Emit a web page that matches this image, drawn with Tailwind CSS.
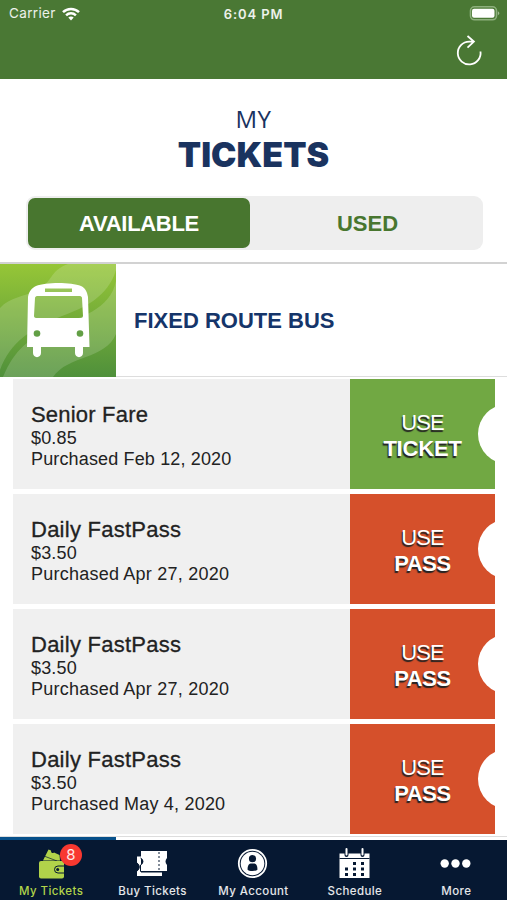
<!DOCTYPE html>
<html lang="en">
<head>
<meta charset="utf-8">
<title>My Tickets</title>
<script src="https://cdn.jsdelivr.net/npm/@tailwindcss/browser@4"></script>
</head>
<body class="w-[507px] h-[900px] overflow-hidden bg-white font-['Liberation_Sans',Arial,sans-serif] flex flex-col whitespace-nowrap">
<header class="h-[79px] shrink-0 bg-[#4a7834] text-white/90 font-[Inter,sans-serif]">
  <div class="grid grid-cols-3 items-center h-7 px-[9px] text-[13px] leading-none">
    <div class="flex items-center gap-[6px]"><span class="tracking-[0.35px] text-[13.5px]">Carrier</span>
      <svg class="-mt-px" width="18" height="14" viewBox="0 0 18 14" fill="none" stroke="#fff" stroke-width="2.5"><path d="M1 5.2C5.4.8 12.6.8 17 5.2M4.1 8.3c2.7-2.6 7.1-2.6 9.8 0"/><path d="M6.3 10.6c1.500-1.400 3.900-1.400 5.400 0L9 13.400z" fill="#fff" stroke="none"/></svg>
    </div>
    <div class="text-center font-semibold tracking-[0.9px]">6:04 PM</div>
    <div class="flex justify-end -mr-[2px] -mt-px"><svg width="31" height="15" viewBox="0 0 31 15"><rect x="1.5" y=".8" width="26" height="13" rx="4" fill="none" stroke="#8db07d" stroke-width="1.6"/><rect x="3" y="2.8" width="22.5" height="9" rx="2" fill="#fff"/><path d="M28.9 5.3c2 1 2 3 0 4z" fill="#9fbb91"/></svg></div>
  </div>
  <div class="flex justify-end pr-[24px] pt-[6px]"><svg width="28" height="32" viewBox="0 0 28 32" fill="none" stroke="#fff" stroke-width="1.8"><path d="M25.5 17.5A11.4 11.4 0 1 1 14.2 7.6H19M12.5 2l6.4 5.6-6.4 6"/></svg></div>
</header>
<section class="h-[117px] shrink-0 pt-[26px] text-center text-[#1a335f]">
  <div class="text-[24px] leading-[28px] tracking-[0.5px] font-['Open_Sans',sans-serif]">MY</div>
  <h1 class="mt-[2px] text-[34px] leading-[40px] font-black font-[Inter,sans-serif] tracking-[0px]">TICKETS</h1>
</section>
<div class="ml-[26px] w-[457px] h-[54px] shrink-0 rounded-[9px] bg-[#eeeeee] p-[2px] flex items-center font-bold text-[22px]">
  <div class="w-[222px] h-[50px] rounded-[7px] bg-[#48762f] text-white flex items-center justify-center tracking-[-0.3px]">AVAILABLE</div>
  <div class="flex-1 text-center text-[#48762f] pl-1">USED</div>
</div>
<section class="mt-[12px] h-[115px] shrink-0 border-t-2 border-t-[#d2d2d2] border-b border-b-[#dddddd] flex items-start">
  <svg class="shrink-0" width="116" height="113" viewBox="0 0 116 113">
    <defs><linearGradient id="g" x2="0" y2="1"><stop stop-color="#96c637"/><stop offset="1" stop-color="#4f903b"/></linearGradient></defs>
    <path fill="url(#g)" d="M0 0h116v113H0z"/>
    <path d="M0 44C10 33 24 33 37 26 54 17 49 7 68 0h48v6C108 33 84 44 62 52 32 64 10 78 0 106z" fill="#fff" fill-opacity=".16"/>
    <path d="M116 17C110 46 80 53 56 63 28 75 15 85 3 113h50C68 91 105 96 116 70z" fill="#fff" fill-opacity=".16"/>
    <path fill="#fff" fill-rule="evenodd" d="M36 22c10-4 35-4 45 0 4 2 6 5 7 11l1.5 50H83v6c0 5.500-8 5.500-8 0v-6H41v6c0 5.500-8 5.500-8 0v-6h-6l1-50c1-6 4-9 8-11zM45 24.500v3.500h27v-3.500zM37 32c-1 0-2 1-2 2l-1 18c0 1 1 2 2 2h45c1 0 2-1 2-2l-1-18c0-1-1-2-2-2z"/>
    <circle cx="37" cy="69.500" r="3.300" fill="#629f45"/><circle cx="80" cy="69.500" r="3.300" fill="#629f45"/>
  </svg>
  <h2 class="ml-[18px] leading-[114px] text-[22px] font-bold text-[#15356a]">FIXED ROUTE BUS</h2>
</section>
<main class="mt-[2px] ml-[13px] w-[482px] flex flex-col gap-[5px] shrink-0 text-[#222] h-[455px]">
  <article class="flex h-[110px] shrink-0"><div class="w-[337px] bg-[#f0f0f0] pl-[18px] pt-[23px]"><h3 class="text-[22px] leading-[26px] tracking-[0.2px] [-webkit-text-stroke:0.3px_#222]">Senior Fare</h3><p class="text-[18px] leading-[21px] tracking-[0.15px]">$0.85</p><p class="text-[18px] leading-[21px] tracking-[0.15px]">Purchased Feb 12, 2020</p></div>
  <button class="relative overflow-hidden w-[145px] pt-[3px] bg-[#71a843] text-white text-[22px] leading-[26px] [text-shadow:-1px_2px_1px_#222]"><span class="block tracking-[-0.9px]">USE</span><b class="block tracking-[-0.2px]">TICKET</b><i class="absolute rounded-full bg-white size-[60px] left-[128px] top-[25px]"></i></button></article>
  <article class="flex h-[110px] shrink-0"><div class="w-[337px] bg-[#f0f0f0] pl-[18px] pt-[23px]"><h3 class="text-[22px] leading-[26px] tracking-[0.25px] [-webkit-text-stroke:0.3px_#222]">Daily FastPass</h3><p class="text-[18px] leading-[21px] tracking-[0.15px]">$3.50</p><p class="text-[18px] leading-[21px] tracking-[0.23px]">Purchased Apr 27, 2020</p></div>
  <button class="relative overflow-hidden w-[145px] pt-[3px] bg-[#d5502b] text-white text-[22px] leading-[26px] [text-shadow:-1px_2px_1px_#222]"><span class="block tracking-[-0.9px]">USE</span><b class="block tracking-[-0.4px]">PASS</b><i class="absolute rounded-full bg-white size-[60px] left-[128px] top-[25px]"></i></button></article>
  <article class="flex h-[110px] shrink-0"><div class="w-[337px] bg-[#f0f0f0] pl-[18px] pt-[23px]"><h3 class="text-[22px] leading-[26px] tracking-[0.25px] [-webkit-text-stroke:0.3px_#222]">Daily FastPass</h3><p class="text-[18px] leading-[21px] tracking-[0.15px]">$3.50</p><p class="text-[18px] leading-[21px] tracking-[0.23px]">Purchased Apr 27, 2020</p></div>
  <button class="relative overflow-hidden w-[145px] pt-[3px] bg-[#d5502b] text-white text-[22px] leading-[26px] [text-shadow:-1px_2px_1px_#222]"><span class="block tracking-[-0.9px]">USE</span><b class="block tracking-[-0.4px]">PASS</b><i class="absolute rounded-full bg-white size-[60px] left-[128px] top-[25px]"></i></button></article>
  <article class="flex h-[110px] shrink-0"><div class="w-[337px] bg-[#f0f0f0] pl-[18px] pt-[23px]"><h3 class="text-[22px] leading-[26px] tracking-[0.25px] [-webkit-text-stroke:0.3px_#222]">Daily FastPass</h3><p class="text-[18px] leading-[21px] tracking-[0.15px]">$3.50</p><p class="text-[18px] leading-[21px] tracking-[0.2px]">Purchased May 4, 2020</p></div>
  <button class="relative overflow-hidden w-[145px] pt-[3px] bg-[#d5502b] text-white text-[22px] leading-[26px] [text-shadow:-1px_2px_1px_#222]"><span class="block tracking-[-0.9px]">USE</span><b class="block tracking-[-0.4px]">PASS</b><i class="absolute rounded-full bg-white size-[60px] left-[128px] top-[25px]"></i></button></article>
</main>
<div class="mt-[2px] h-[4px] shrink-0 border-t border-[#ddd] flex"><div class="w-[116px] bg-[#07508a]"></div></div>
<nav class="h-[61px] shrink-0 bg-[#061832] text-white/90 grid grid-cols-5 font-[Inter,sans-serif] text-[11.5px] leading-[14px] font-medium tracking-[0.4px]">
  <div class="relative flex flex-col items-center text-[#b1d34a] pt-[7px]"><svg width="30" height="33" viewBox="0 0 30 33"><path d="m7 13.500 5.500-11 2.500 1c0 3 2 3 3 2L23.500 8 24 13.500z" fill="#b1d34a"/><path d="m8 9 13 5" stroke="#061832" stroke-width=".7"/><rect x="3" y="14" width="25" height="17.500" rx="2" fill="#b1d34a"/><path d="M28 19h-6a3.500 3.500 0 0 0 0 7h6" fill="none" stroke="#061832"/><circle cx="21.700" cy="22.500" r="1.500" fill="#061832"/></svg><span class="mt-[4px] ml-px">My Tickets</span><b class="absolute left-[60px] top-[4px] size-[22px] rounded-full bg-[#f83830] text-white/90 text-[15px] leading-[22px] text-center font-normal tracking-normal">8</b></div>
  <div class="flex flex-col items-center pt-[7px]"><svg width="32" height="33" viewBox="0 0 32 33"><path d="M1 9.500h4v16h21v3.500H1v-5c3-2 3-6 0-8z" fill="#fff"/><path d="M5 4h26v7c-2 2-2 5 0 7v6H5v-6c3-2 3-5 0-7z" fill="#fff"/><path d="M1 16c3 2 3 6 0 8M4.500 11c3 2 3 5 0 7v6.500H26" fill="none" stroke="#061832" stroke-width="1"/><path d="M23 5v19" stroke="#061832" stroke-dasharray="2"/></svg><span class="mt-[4px] ml-px">Buy Tickets</span></div>
  <div class="flex flex-col items-center pt-[7px]"><svg width="32" height="33" viewBox="0 0 32 33"><circle cx="15.500" cy="16.500" r="13.700" fill="none" stroke="#fff" stroke-width="1.800"/><circle cx="15.500" cy="16.500" r="11.800" fill="#fff"/><circle cx="15.500" cy="11.700" r="3.600" fill="#061832"/><path d="M10.500 22.500c0-4 1.500-6 3-6h4c1.500 0 3 2 3 6-1 2-9 2-10 0z" fill="#061832"/></svg><span class="mt-[4px]">My Account</span></div>
  <div class="flex flex-col items-center pt-[7px]"><svg width="32" height="33" viewBox="0 0 32 33"><path d="M.500 6.500h30V31h-30z" fill="#fff"/><path d="M.500 11.500h30" stroke="#061832"/><path d="M7.500 2v6M23.500 2v6" stroke="#061832" stroke-width="4" stroke-linecap="round"/><path d="M7.500 2v5.500M23.500 2v5.500" stroke="#fff" stroke-width="2" stroke-linecap="round"/><path d="M14 16.500h3m5 0h3M6 22h3m5 0h3m5 0h3M6 27.500h3m5 0h3m5 0h3" stroke="#061832" stroke-width="3"/></svg><span class="mt-[4px]">Schedule</span></div>
  <div class="flex flex-col items-center pt-[7px]"><svg width="32" height="33" viewBox="0 0 32 33" fill="#fff"><circle cx="4.700" cy="16.500" r="4.200"/><circle cx="15.500" cy="16.500" r="4.200"/><circle cx="26.300" cy="16.500" r="4.200"/></svg><span class="mt-[4px]">More</span></div>
</nav>
</body>
</html>
